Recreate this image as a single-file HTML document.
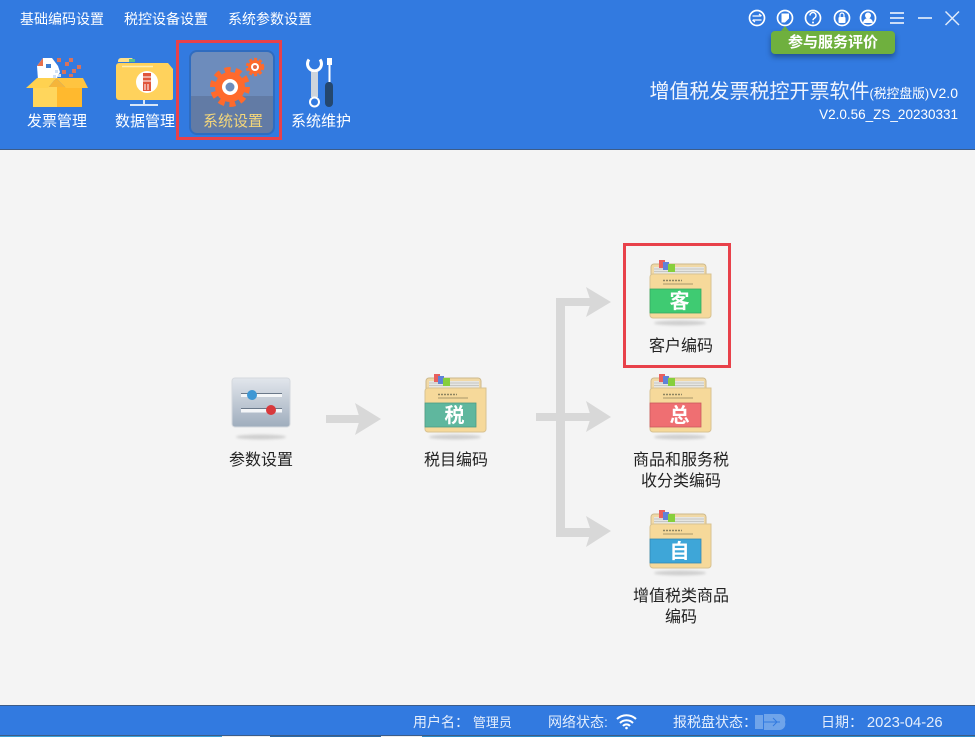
<!DOCTYPE html>
<html lang="zh"><head><meta charset="utf-8"><style>
html,body{margin:0;padding:0}
body{width:975px;height:737px;position:relative;overflow:hidden;background:#f4f4f4;font-family:"Liberation Sans","Noto Sans CJK SC",sans-serif}
.a{position:absolute;white-space:nowrap}
.hd{left:0;top:0;width:975px;height:149px;background:#327ae0;border-bottom:1px solid #3d5c88}
.ft{left:0;top:705px;width:975px;height:29px;background:#327ae0;border-top:1px solid #3d5c88;border-bottom:1px solid #3d5c88}
.w{color:#fff}
.m{font-size:14px;line-height:20px;top:9px;color:#fff}
.n{font-size:15px;line-height:20px;top:112px;color:#fff}
.t{font-size:16px;line-height:21px;color:#222;text-align:center;width:110px}
.f{font-size:14px;line-height:20px;top:712px;color:#e4eefc}
.r{border:3px solid #e8414a;box-sizing:border-box}
.c{left:650px;width:59px;font-size:20px;line-height:26px;font-weight:bold;text-align:center;color:#fff}
svg{position:absolute;left:0;top:0}
</style></head><body>
<div class="a hd"></div>
<div class="a" style="left:0;top:736px;width:975px;height:1px;background:linear-gradient(90deg,#3aa0d8 0,#3aa0d8 222px,#eeeeee 222px,#eeeeee 270px,#2a6aa8 270px,#2a6aa8 381px,#eeeeee 381px,#eeeeee 422px,#2a8ac8 422px)"></div>
<div class="a ft"></div>

<div class="a m" style="left:20px">基础编码设置</div>
<div class="a m" style="left:124px">税控设备设置</div>
<div class="a m" style="left:228px">系统参数设置</div>

<div class="a" style="left:189px;top:50px;width:86px;height:85px;box-sizing:border-box;border:2px solid #2f6cc0;border-radius:8px;background:linear-gradient(#6d8cbc 0,#6d8cbc 44px,#627ba5 44px)"></div>
<div class="a r" style="left:176px;top:40px;width:106px;height:100px"></div>

<svg width="975" height="737" viewBox="0 0 975 737">
<defs>
<filter id="bl" x="-20%" y="-100%" width="140%" height="300%"><feGaussianBlur stdDeviation="1.200"/></filter>
<linearGradient id="sl" x1="0" y1="0" x2="0" y2="1"><stop offset="0" stop-color="#e2e6ec"/><stop offset="1" stop-color="#9fadbd"/></linearGradient>
<g id="book">
<ellipse cx="30" cy="63" rx="26" ry="2.500" fill="#cfcfcf" filter="url(#bl)"/>
<rect x="1" y="4" width="55" height="18" rx="3" fill="#f1d9a6" stroke="#cdb98c" stroke-width="1"/>
<rect x="4" y="7" width="50" height="8" fill="#e6e6e2"/>
<path d="M4 9H54M4 11.500H54M4 14H54" stroke="#bdbdb8" stroke-width=".8"/>
<rect x="9" y="0" width="6" height="8" fill="#e8605e"/>
<rect x="13" y="2" width="6" height="8" fill="#5f82d8"/>
<rect x="18" y="4" width="7" height="8" fill="#86cf3c"/>
<path d="M3 14H61V55a3 3 0 0 1-3 3H3a3 3 0 0 1-3-3V17a3 3 0 0 1 3-3z" fill="#f6d99a" stroke="#d8c292" stroke-width="1"/>
<path d="M13 24H43" stroke="#a8966a" stroke-width=".9" fill="none"/>
<path d="M13 20.500H32" stroke="#8d8460" stroke-width="1.400" stroke-dasharray="2 1" fill="none"/>
</g>
</defs>

<!-- box icon -->
<path d="M37 66L43 58H52L58 66L60 72L56 80H38z" fill="#fff"/>
<path d="M37 66l6-8v8z" fill="#e8704a"/>
<rect x="46" y="64" width="5" height="4" fill="#3f7fd0"/>
<g fill="#d8735c"><rect x="57" y="58" width="4" height="4"/><rect x="69" y="58" width="4" height="4"/><rect x="65" y="62" width="4" height="4"/><rect x="77" y="65" width="4" height="4"/><rect x="72" y="69" width="4" height="4"/><rect x="62" y="70" width="4" height="4"/><rect x="69" y="74" width="4" height="3"/></g>
<g fill="#cfe0f5"><rect x="55" y="70" width="3" height="3"/><rect x="58" y="74" width="3" height="3"/><rect x="53" y="75" width="3" height="3"/></g>
<path d="M48 88L56 78L66 88z" fill="#f5b53a"/>
<path d="M33 87H57V107H33z" fill="#ffd65c"/>
<path d="M57 87H82V107H57z" fill="#ffb92e"/>
<path d="M26 88L37 78H56L48 88z" fill="#ffd250"/>
<path d="M56 78H83L88 88H66z" fill="#ffc440"/>

<!-- folder icon -->
<path d="M118 61a3 3 0 0 1 3-3h11l3 4h-17z" fill="#ffe08a"/>
<rect x="129" y="59" width="6" height="3" fill="#5cc08a"/>
<path d="M116 66a3 3 0 0 1 3-3h49l5 6v29a2 2 0 0 1-2 2H119a3 3 0 0 1-3-3z" fill="#ffd25c"/>
<path d="M122 66.500H153" stroke="#ffeeb0" stroke-width="1.600"/>
<circle cx="147" cy="82" r="11" fill="#fff"/>
<rect x="143" y="73" width="8" height="18" fill="#e0563c"/>
<path d="M143 77H151M143 81H151M145 84V90M148 84V90" stroke="#fff" stroke-width="1"/>
<path d="M144 100V104M130 105H158" stroke="#d8e6f8" stroke-width="2" fill="none"/>

<!-- gears -->
<circle cx="230" cy="87" r="15" fill="#ff6a2c"/>
<circle cx="230" cy="87" r="17" fill="none" stroke="#ff6a2c" stroke-width="6" stroke-dasharray="5.900 4.770"/>
<circle cx="230" cy="87" r="8" fill="#fff"/>
<circle cx="230" cy="87" r="4.500" fill="#6d8cbc"/>
<circle cx="255" cy="67" r="7" fill="#ff6a2c"/>
<circle cx="255" cy="67" r="7.500" fill="none" stroke="#ff6a2c" stroke-width="3.500" stroke-dasharray="2.800 2.090"/>
<circle cx="255" cy="67" r="4" fill="#fff"/>
<circle cx="255" cy="67" r="2" fill="#e06a4a"/>

<!-- tools -->
<path d="M309 59.500A7 7 0 1 0 320 59.500" fill="none" stroke="#fff" stroke-width="3"/>
<rect x="311" y="72" width="7" height="25" fill="#cdd4dc"/>
<circle cx="314.500" cy="102" r="4.500" fill="none" stroke="#fff" stroke-width="2"/>
<rect x="327" y="58" width="5" height="7" fill="#fff"/>
<rect x="328.500" y="65" width="2" height="17" fill="#fff"/>
<rect x="325" y="82" width="8" height="25" rx="4" fill="#24476e"/>

<!-- window icons -->
<g fill="none" stroke="#fff" stroke-width="1.700">
<circle cx="757" cy="18" r="7.500"/>
<path d="M752.500 16H761M759 14l2.500 2M761.500 20H753M755 22l-2.500-2" stroke-width="1.200"/>
<circle cx="785" cy="18" r="7.500"/>
<path d="M781.500 13.500h7.500v5l-4 4h-3.500z" fill="#fff" stroke="none"/>
<circle cx="813" cy="18" r="7.500"/>
<path d="M810 15.500a3 3 0 1 1 4.500 2.600c-1 .6-1.500 1-1.500 2.200" stroke-width="1.400"/>
<circle cx="842" cy="18" r="7.500"/>
<circle cx="868" cy="18" r="7.500"/>
<path d="M890 13H904M890 18H904M890 23H904" stroke-width="1.700" stroke="#dfeafa"/>
<path d="M918 18H932" stroke-width="1.700" stroke="#dfeafa"/>
<path d="M945.500 11.500L959 25M959 11.500L945.500 25" stroke-width="1.500" stroke="#dfeafa"/>
</g>
<circle cx="813" cy="22.500" r="1" fill="#fff"/>
<rect x="838.500" y="17" width="7" height="6" rx="1" fill="#fff"/>
<path d="M840 17v-2a2 2 0 0 1 4 0v2" fill="none" stroke="#fff" stroke-width="1.200"/>
<circle cx="868" cy="15.500" r="3" fill="#fff"/>
<path d="M863 23a5 5 0 0 1 10 0z" fill="#fff"/>
<path d="M785 26l4 5h-8z" fill="#6fb03e"/>

<!-- slider icon -->
<rect x="232" y="378" width="58" height="49" rx="3" fill="url(#sl)" stroke="#d5d9de"/>
<path d="M241 393.500H282M241 408.500H282" stroke="#6a7889" stroke-width="1"/>
<rect x="241" y="394" width="41" height="3" fill="#f4f6f8"/>
<rect x="241" y="409" width="41" height="3.500" fill="#f4f6f8"/>
<circle cx="252" cy="395" r="5" fill="#3e97d4"/>
<circle cx="271" cy="410" r="5" fill="#d8393c"/>
<ellipse cx="261" cy="437" rx="25" ry="2.500" fill="#cfcfcf" filter="url(#bl)"/>

<!-- arrows -->
<g fill="#d8d8d8">
<path d="M326 415H360V423H326z"/>
<path d="M355 403L381 419L355 435L360 419z"/>
<path d="M536 413H596V421H536z"/>
<path d="M556 298H596V306H565V528H596V537H556z"/>
<path d="M586 287L611 302L586 317L591 302z"/>
<path d="M586 401L611 417L586 432L591 417z"/>
<path d="M586 516L611 531L586 547L591 531z"/>
</g>

<!-- books -->
<use href="#book" x="425" y="374"/>
<rect x="425" y="403" width="51" height="24" fill="#5fb79e"/><rect x="425" y="403" width="51" height="24" fill="none" stroke="#4b9b84" stroke-width=".8"/>
<use href="#book" x="650" y="260"/>
<rect x="650" y="289" width="51" height="24" fill="#3fcb72"/><rect x="650" y="289" width="51" height="24" fill="none" stroke="#36a862" stroke-width=".8"/>
<use href="#book" x="650" y="374"/>
<rect x="650" y="403" width="51" height="24" fill="#ef6f72"/><rect x="650" y="403" width="51" height="24" fill="none" stroke="#c95a5d" stroke-width=".8"/>
<use href="#book" x="650" y="510"/>
<rect x="650" y="539" width="51" height="24" fill="#3ea6d8"/><rect x="650" y="539" width="51" height="24" fill="none" stroke="#3289b4" stroke-width=".8"/>

<!-- wifi -->
<g fill="none" stroke="#fff" stroke-width="2">
<path d="M617 719a14 14 0 0 1 19 0M620 723a9 9 0 0 1 13 0M623 726a4.500 4.500 0 0 1 7 0"/>
</g>
<circle cx="626.500" cy="728" r="1.300" fill="#fff"/>
<!-- disk -->
<rect x="755" y="715" width="8" height="14" fill="#6fa4ea"/>
<path d="M764 714H779a6 6 0 0 1 6 8 6 6 0 0 1-6 8H764z" fill="#6fa4ea"/>
<path d="M764 722H780M773 718l4 4-4 4" stroke="#327ae0" fill="none"/>
</svg>

<div class="a n" style="left:27px">发票管理</div>
<div class="a n" style="left:115px">数据管理</div>
<div class="a n" style="left:203px;color:#f5d77a">系统设置</div>
<div class="a n" style="left:291px">系统维护</div>

<div class="a" style="left:771px;top:31px;width:124px;height:23px;background:#6fb03e;border-radius:4px;box-shadow:0 3px 6px rgba(0,0,0,.35);color:#fff;font-size:15px;font-weight:bold;line-height:23px;text-align:center">参与服务评价</div>

<div class="a w" style="right:17px;top:79px;font-size:20px;line-height:26px"><span style="color:#f0f5fd">增值税发票税控开票软件</span><span style="font-size:12.800px">(税控盘版)</span><span style="font-size:14px">V2.0</span></div>
<div class="a w" style="right:17px;top:106px;font-size:13.500px;line-height:18px">V2.0.56_ZS_20230331</div>

<div class="a c" style="left:425px;top:403px">税</div>
<div class="a c" style="top:289px">客</div>
<div class="a c" style="top:403px">总</div>
<div class="a c" style="top:539px">自</div>

<div class="a t" style="left:206px;top:450px">参数设置</div>
<div class="a t" style="left:401px;top:450px">税目编码</div>
<div class="a t" style="left:626px;top:336px">客户编码</div>
<div class="a t" style="left:626px;top:450px">商品和服务税<br>收分类编码</div>
<div class="a t" style="left:626px;top:586px">增值税类商品<br>编码</div>
<div class="a r" style="left:623px;top:243px;width:108px;height:125px"></div>

<div class="a f" style="left:413px">用户名： <span style="font-size:13px">管理员</span></div>
<div class="a f" style="left:548px">网络状态:</div>
<div class="a f" style="left:673px">报税盘状态：</div>
<div class="a f" style="left:821px">日期： <span style="font-size:14.800px">2023-04-26</span></div>
</body></html>
